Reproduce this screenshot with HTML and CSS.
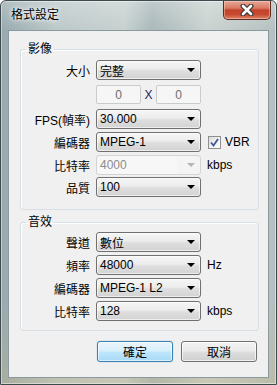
FILE: index.html
```html
<!DOCTYPE html>
<html lang="zh-Hant">
<head>
    <meta charset="UTF-8">
    <title>格式設定</title>
    <link rel="stylesheet" href="styles.css">
</head>
<body>
    <div class="window">
        <div class="titlebar">
            <span class="title">格式設定</span>
            <div class="close">
                <svg width="16" height="12" viewBox="0 0 16 12">
                    <path d="M4 2 L12 10 M12 2 L4 10" stroke="#3b3b3b" stroke-width="5" stroke-linecap="round"/>
                    <path d="M4 2 L12 10 M12 2 L4 10" stroke="#ffffff" stroke-width="2.6" stroke-linecap="round"/>
                </svg>
            </div>
        </div>

        <div class="client">
            <fieldset class="group video">
                <legend>影像</legend>
                <div class="row">
                    <span class="label">大小</span>
                    <div class="combo"><span>完整</span><i class="arrow"></i></div>
                </div>
                <div class="row row-size">
                    <span class="label"></span>
                    <div class="size-inputs">
                        <div class="edit">0</div>
                        <span class="x">X</span>
                        <div class="edit">0</div>
                    </div>
                </div>
                <div class="row row-fps">
                    <span class="label">FPS(幀率)</span>
                    <div class="combo"><span>30.000</span><i class="arrow"></i></div>
                </div>
                <div class="row">
                    <span class="label">編碼器</span>
                    <div class="combo"><span>MPEG-1</span><i class="arrow"></i></div>
                    <label class="check">
                        <span class="box">
                            <svg width="9" height="9" viewBox="0 0 9 9">
                                <path d="M1 4.5 L3.5 7.5 L8 1" fill="none" stroke="#3d5a98" stroke-width="1.8"/>
                            </svg>
                        </span>
                        VBR
                    </label>
                </div>
                <div class="row">
                    <span class="label">比特率</span>
                    <div class="combo disabled"><span>4000</span><i class="arrow"></i></div>
                    <span class="unit">kbps</span>
                </div>
                <div class="row row-quality">
                    <span class="label">品質</span>
                    <div class="combo"><span>100</span><i class="arrow"></i></div>
                </div>
            </fieldset>

            <fieldset class="group audio">
                <legend>音效</legend>
                <div class="row">
                    <span class="label">聲道</span>
                    <div class="combo"><span>數位</span><i class="arrow"></i></div>
                </div>
                <div class="row">
                    <span class="label">頻率</span>
                    <div class="combo"><span>48000</span><i class="arrow"></i></div>
                    <span class="unit">Hz</span>
                </div>
                <div class="row">
                    <span class="label">編碼器</span>
                    <div class="combo"><span>MPEG-1 L2</span><i class="arrow"></i></div>
                </div>
                <div class="row">
                    <span class="label">比特率</span>
                    <div class="combo"><span>128</span><i class="arrow"></i></div>
                    <span class="unit">kbps</span>
                </div>
            </fieldset>

            <div class="buttons">
                <button class="btn default">確定</button>
                <button class="btn">取消</button>
            </div>
        </div>
    </div>
</body>
</html>
```

FILE: styles.css
```css
* {
    box-sizing: border-box;
}

body {
    margin: 0;
    background: #ffffff;
    font-family: "Liberation Sans", "Noto Sans CJK TC", sans-serif;
    font-size: 12px;
    color: #000000;
}

.window {
    width: 277px;
    height: 385px;
    display: flex;
    flex-direction: column;
    padding: 0 7px 6px 7px;
    border: 1px solid #3e4a4e;
    border-radius: 6px 6px 0 0;
    background:
        linear-gradient(180deg, rgba(255, 255, 255, 0.25) 0px, rgba(255, 255, 255, 0) 30px, rgba(0, 0, 0, 0) 300px, rgba(200, 180, 130, 0.35) 385px),
        linear-gradient(90deg, #97a9ae 0%, #bcc8c8 20%, #c6d0cf 45%, #a9b8ba 55%, #c9d2cf 75%, #b4c0bf 100%);
    box-shadow: inset 0 0 0 1px rgba(255, 255, 255, 0.45);
}

.titlebar {
    height: 29px;
    display: flex;
    justify-content: space-between;
    align-items: flex-start;
}

.title {
    padding: 6px 0 0 3px;
    font-size: 12px;
    line-height: 16px;
    color: #000000;
    text-shadow: 0 0 6px #ffffff, 0 0 3px #ffffff;
}

.close {
    width: 48px;
    height: 19px;
    margin-right: -2px;
    display: flex;
    justify-content: center;
    align-items: center;
    border: 1px solid #5b2c24;
    border-top: none;
    border-radius: 0 0 5px 5px;
    background: linear-gradient(180deg, #e7a797 0%, #d97a62 40%, #c2432a 50%, #c74a30 75%, #df8566 100%);
    box-shadow: inset 0 0 0 1px rgba(255, 220, 200, 0.45);
}

.client {
    flex: 1;
    padding: 0 9px 0 11px;
    background: #f0f0f0;
    border: 1px solid #8a999e;
}

.group {
    margin: 11px 0 0 0;
    padding: 0 0 12px 0;
    border: 1px solid #d5dfe5;
    border-radius: 3px;
    box-shadow: inset 1px 1px 0 #ffffff;
}

.group legend {
    margin-left: 5px;
    padding: 0 2px;
    line-height: 15px;
}

.audio {
    margin-top: 5px;
    padding-bottom: 9px;
}

.row {
    display: grid;
    grid-template-columns: 69px 105px auto;
    column-gap: 6px;
    align-items: center;
    height: 20px;
    margin-top: 3px;
}

.video .row:first-of-type {
    margin-top: 3px;
}

.row-size {
    height: 19px;
    margin-top: 5px;
}

.row-fps {
    margin-top: 5px;
}

.row-quality {
    margin-top: 2px;
}

.audio .row:first-of-type {
    margin-top: 2px;
}

.label {
    text-align: right;
    white-space: nowrap;
}

.combo {
    height: 20px;
    display: flex;
    align-items: center;
    justify-content: space-between;
    padding: 0 5px 0 3px;
    border: 1px solid #707070;
    border-radius: 3px;
    background: linear-gradient(180deg, #f6f6f6 0%, #ececec 45%, #dedede 55%, #d3d3d3 100%);
    box-shadow: inset 0 0 0 1px rgba(255, 255, 255, 0.6);
    white-space: nowrap;
}

.arrow {
    width: 0;
    height: 0;
    border-left: 4px solid transparent;
    border-right: 4px solid transparent;
    border-top: 4px solid #000000;
}

.combo.disabled {
    border-color: #d2d4d6;
    background: linear-gradient(90deg, #f7f7f7 0, #f7f7f7 80px, #f4f4f4 80px);
    box-shadow: none;
    color: #8d8d8d;
}

.combo.disabled .arrow {
    border-top-color: #b4b4b4;
}

.size-inputs {
    display: flex;
    align-items: center;
    justify-content: space-between;
}

.edit {
    width: 45px;
    height: 19px;
    display: flex;
    align-items: center;
    justify-content: center;
    border: 1px solid #c9cbcd;
    border-radius: 2px;
    background: #f6f6f6;
    color: #6d6d6d;
}

.x {
    color: #1d2a5e;
}

.unit {
    color: #000000;
}

.check {
    display: flex;
    align-items: center;
    gap: 4px;
    margin-left: 1px;
}

.check .box {
    width: 13px;
    height: 13px;
    display: flex;
    align-items: center;
    justify-content: center;
    border: 1px solid #8e8f8f;
    background: linear-gradient(135deg, #dcdcdc 0%, #f4f4f4 60%, #ffffff 100%);
}

.buttons {
    display: flex;
    justify-content: flex-end;
    gap: 8px;
    margin-top: 10px;
    padding-right: 2px;
}

.btn {
    width: 76px;
    height: 21px;
    padding: 0;
    font-family: inherit;
    font-size: 12px;
    color: #000000;
    border: 1px solid #707070;
    border-radius: 3px;
    background: linear-gradient(180deg, #f2f2f2 0%, #ebebeb 45%, #dddddd 55%, #cfcfcf 100%);
    box-shadow: inset 0 0 0 1px rgba(255, 255, 255, 0.7);
}

.btn.default {
    border-color: #3c7fb1;
    background: linear-gradient(180deg, #eaf6fd 0%, #d9f0fc 45%, #bee6fd 55%, #a7d9f5 100%);
    box-shadow: inset 0 0 0 1px rgba(255, 255, 255, 0.6), 0 0 1px #48a0e0;
}
```
